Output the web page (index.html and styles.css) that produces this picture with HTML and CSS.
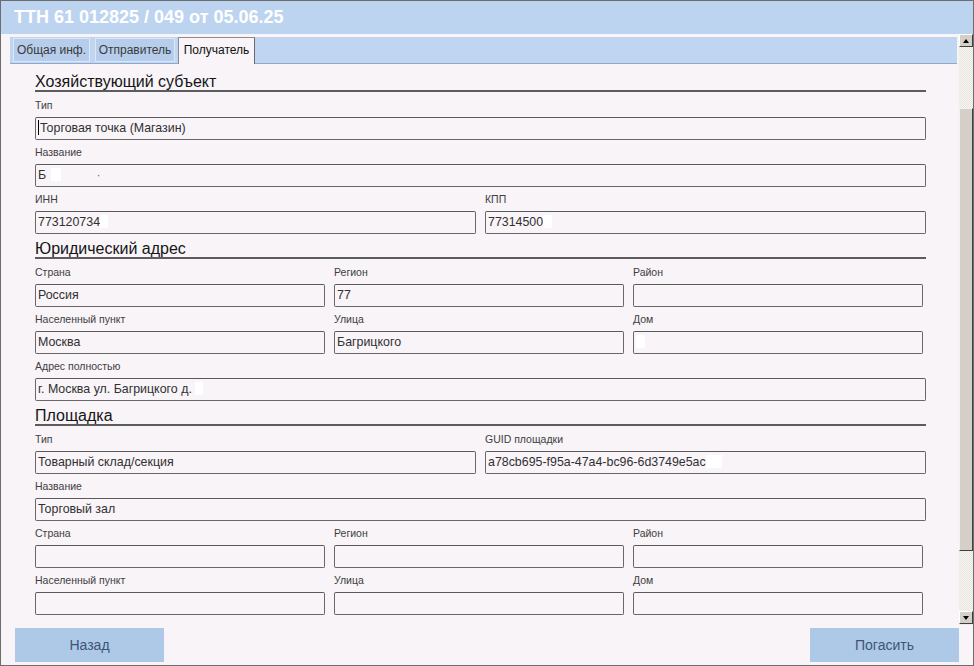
FILE: index.html
```html
<!DOCTYPE html>
<html lang="ru">
<head>
<meta charset="utf-8">
<title>ТТН</title>
<link rel="stylesheet" href="styles.css">
</head>
<body>
<div class="window">
  <div class="titlebar">ТТН 61 012825 / 049 от 05.06.25</div>
  <div class="main">
    <div class="scrollarea">
      <div class="tabstrip">
        <div class="tab t1">Общая инф.</div>
        <div class="tab t2">Отправитель</div>
        <div class="tab t3 active">Получатель</div>
      </div>
      <div class="content">
        <div class="heading">Хозяйствующий субъект</div>
        <div class="row c1">
          <div class="field"><div class="label">Тип</div><div class="input"><span class="caret"></span>Торговая точка (Магазин)</div></div>
        </div>
        <div class="row c1">
          <div class="field"><div class="label">Название</div><div class="input">Б <span class="redact w10"></span><span class="dot">·</span></div></div>
        </div>
        <div class="row c2">
          <div class="field"><div class="label">ИНН</div><div class="input">773120734<span class="redact w8"></span></div></div>
          <div class="field"><div class="label">КПП</div><div class="input">77314500<span class="redact w9"></span></div></div>
        </div>

        <div class="heading">Юридический адрес</div>
        <div class="row c3">
          <div class="field"><div class="label">Страна</div><div class="input">Россия</div></div>
          <div class="field"><div class="label">Регион</div><div class="input">77</div></div>
          <div class="field"><div class="label">Район</div><div class="input"></div></div>
        </div>
        <div class="row c3">
          <div class="field"><div class="label">Населенный пункт</div><div class="input">Москва</div></div>
          <div class="field"><div class="label">Улица</div><div class="input">Багрицкого</div></div>
          <div class="field"><div class="label">Дом</div><div class="input"><span class="redact w9"></span></div></div>
        </div>
        <div class="row c1">
          <div class="field"><div class="label">Адрес полностью</div><div class="input">г. Москва ул. Багрицкого д. <span class="redact w8"></span></div></div>
        </div>

        <div class="heading">Площадка</div>
        <div class="row c2">
          <div class="field"><div class="label">Тип</div><div class="input">Товарный склад/секция</div></div>
          <div class="field"><div class="label">GUID площадки</div><div class="input">a78cb695-f95a-47a4-bc96-6d3749e5ac<span class="redact w16"></span></div></div>
        </div>
        <div class="row c1">
          <div class="field"><div class="label">Название</div><div class="input">Торговый зал</div></div>
        </div>
        <div class="row c3">
          <div class="field"><div class="label">Страна</div><div class="input"></div></div>
          <div class="field"><div class="label">Регион</div><div class="input"></div></div>
          <div class="field"><div class="label">Район</div><div class="input"></div></div>
        </div>
        <div class="row c3">
          <div class="field"><div class="label">Населенный пункт</div><div class="input"></div></div>
          <div class="field"><div class="label">Улица</div><div class="input"></div></div>
          <div class="field"><div class="label">Дом</div><div class="input"></div></div>
        </div>
      </div>
    </div>
    <div class="scrollbar">
      <div class="sb-btn up"></div>
      <div class="sb-track"><div class="thumb"></div></div>
      <div class="sb-btn down"></div>
      <div class="sb-end"></div>
    </div>
  </div>
  <div class="footer">
    <div class="btn">Назад</div>
    <div class="btn">Погасить</div>
  </div>
</div>
</body>
</html>
```
FILE: styles.css
```css
html, body {
  margin: 0;
  padding: 0;
  background: #f8f4f8;
  font-family: "Liberation Sans", Arial, sans-serif;
}

.window {
  width: 974px;
  height: 666px;
  box-sizing: border-box;
  border: 1px solid #6d6d6d;
  display: flex;
  flex-direction: column;
  background: #f8f4f8;
  overflow: hidden;
}

.titlebar {
  flex: none;
  height: 33px;
  background: #bdd4f0;
  color: #ffffff;
  font-weight: bold;
  font-size: 18px;
  line-height: 33px;
  padding-left: 13px;
  white-space: nowrap;
}

.main {
  flex: none;
  height: 591px;
  display: flex;
}

.scrollarea {
  flex: 1;
  min-width: 0;
  overflow: hidden;
  display: flex;
  flex-direction: column;
}

.tabstrip {
  flex: none;
  margin: 3px 0 0 9px;
  height: 26px;
  border-bottom: 1px solid #8fa9cc;
  background: #bfd5f1;
  display: flex;
  align-items: flex-end;
  padding-left: 3px;
}

.tab {
  box-sizing: border-box;
  height: 24px;
  margin-bottom: 1px;
  font-size: 12px;
  line-height: 22px;
  text-align: center;
  color: #3a3a3a;
  background: #b6ceec;
  border: 1px solid #dce7f5;
  white-space: nowrap;
}

.t1 { width: 77px; margin-right: 5px; }
.t2 { width: 80px; margin-right: 3px; }
.t3 { width: 77px; }

.tab.active {
  height: 27px;
  margin-bottom: -1px;
  background: #f8f4f8;
  color: #111;
  border: 1px solid #8c8c8c;
  border-bottom: none;
  border-right-color: #6a6a6a;
  line-height: 24px;
}

.content {
  padding: 9px 31px 0 34px;
  display: flex;
  flex-direction: column;
  gap: 6px;
}

.heading {
  font-size: 16px;
  line-height: 17px;
  color: #151515;
  border-bottom: 2px solid #5c5c5c;
  margin-bottom: 1px;
  white-space: nowrap;
}

.row {
  display: grid;
  column-gap: 9px;
}

.c1 { grid-template-columns: 1fr; }
.c2 { grid-template-columns: 1fr 1fr; }
.c3 { grid-template-columns: repeat(3, 290px); }

.label {
  font-size: 10.5px;
  line-height: 13px;
  color: #3e3e3e;
  margin-bottom: 5px;
  white-space: nowrap;
}

.input {
  box-sizing: border-box;
  height: 23px;
  border: 1px solid #686868;
  border-top-color: #5a5a5a;
  border-radius: 2px;
  background: #f8f4f8;
  font-size: 12.4px;
  line-height: 21px;
  padding-left: 2px;
  color: #303030;
  white-space: nowrap;
  overflow: hidden;
}

.caret {
  display: inline-block;
  width: 0;
  height: 15px;
  border-left: 1px solid #000;
  vertical-align: -3px;
  margin-right: 1px;
}

.redact {
  display: inline-block;
  height: 13px;
  background: #ffffff;
  vertical-align: -2px;
}

.w8 { width: 8px; }
.w9 { width: 9px; }
.w10 { width: 10px; margin-left: 1px; }
.w16 { width: 16px; }

.dot {
  margin-left: 36px;
  color: #777;
}

.scrollbar {
  flex: none;
  width: 16px;
  box-sizing: border-box;
  border-left: 2px solid #f6f5f3;
  display: flex;
  flex-direction: column;
  background: #eeede8;
}

.sb-btn {
  flex: none;
  height: 13px;
  box-sizing: border-box;
  background: #d4d0c8;
  border: 1px solid;
  border-color: #ffffff #404040 #404040 #ffffff;
  display: flex;
  align-items: center;
  justify-content: center;
}

.sb-btn::before {
  content: "";
  width: 0;
  height: 0;
  border-left: 3px solid transparent;
  border-right: 3px solid transparent;
}

.up::before { border-bottom: 4px solid #000; }
.down::before { border-top: 4px solid #000; }

.sb-track {
  flex: 1;
  display: flex;
  flex-direction: column;
  background: repeating-conic-gradient(#f7f6f3 0 25%, #e6e4de 0 50%) 0 0 / 2px 2px;
}

.thumb {
  margin-top: 61px;
  height: 443px;
  box-sizing: border-box;
  background: #d4d0c8;
  border: 1px solid;
  border-color: #f2f2f2 #404040 #404040 #f2f2f2;
}

.sb-end {
  flex: none;
  height: 1px;
}

.footer {
  flex: 1;
  display: flex;
  justify-content: space-between;
  align-items: flex-start;
  padding: 3px 14px 0 14px;
}

.btn {
  width: 149px;
  height: 34px;
  background: #aec8e8;
  color: #3b5576;
  font-size: 14px;
  display: flex;
  align-items: center;
  justify-content: center;
}
```
